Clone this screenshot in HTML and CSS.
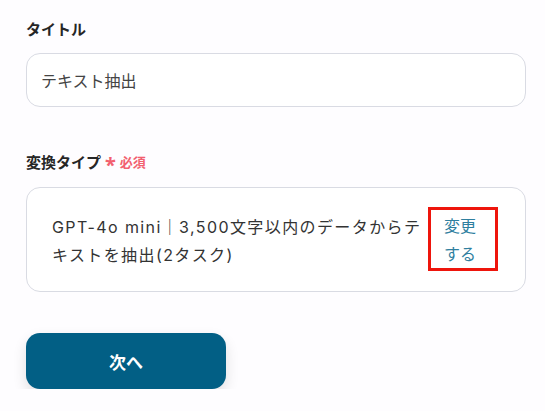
FILE: index.html
```html
<!DOCTYPE html>
<html lang="ja">
<head>
<meta charset="utf-8">
<link rel="stylesheet" href="styles.css">
</head>
<body>
<main class="form">
  <section class="field">
    <div class="label">タイトル</div>
    <div class="input">テキスト抽出</div>
  </section>
  <section class="field field-type">
    <div class="label">変換タイプ<span class="req"><span class="ast">*</span>必須</span></div>
    <div class="select">
      <div class="select-text">GPT-4o mini｜3,500文字以内のデータからテキストを抽出(2タスク)</div>
      <div class="change-wrap"><a class="change">変更する</a></div>
    </div>
  </section>
  <button class="next">次へ</button>
</main>
</body>
</html>
```
FILE: styles.css
```css
html, body {
  margin: 0;
  padding: 0;
  background: #fefdff;
}
body {
  font-family: "Noto Sans", "Noto Sans CJK JP", sans-serif;
  color: #333;
}
.form {
  padding: 18px 19px 0 26px;
  display: flex;
  flex-direction: column;
}
.label {
  font-size: 15px;
  font-weight: 700;
  color: #262626;
  line-height: 22px;
  display: flex;
  align-items: center;
}
.input {
  margin-top: 13px;
  height: 54px;
  box-sizing: border-box;
  border: 1px solid #d9dbe3;
  border-radius: 14px;
  background: #fff;
  padding: 0 14px;
  display: flex;
  align-items: center;
  font-size: 16px;
  color: #444;
}
.field-type {
  margin-top: 44px;
}
.req {
  color: #f2606f;
  font-size: 13px;
  font-weight: 700;
  margin-left: 4px;
  display: inline-flex;
  align-items: center;
}
.ast {
  font-size: 20px;
  margin-right: 4px;
  position: relative;
  top: 3px;
}
.select {
  margin-top: 14px;
  border: 1px solid #d9dbe3;
  border-radius: 14px;
  background: #fff;
  padding: 25px 27px 20px 25px;
  display: flex;
  align-items: flex-start;
}
.select-text {
  width: 376px;
  font-family: "Inter", "Noto Sans CJK JP", sans-serif;
  font-size: 16px;
  letter-spacing: 1.4px;
  line-height: 28px;
  color: #333;
}
.change-wrap {
  border: 3px solid #ee150c;
  padding: 2px 19px 0 13px;
  margin-top: -6px;
}
.change {
  display: block;
  width: 2em;
  font-size: 16px;
  line-height: 28px;
  color: #2f7f9f;
}
.next {
  margin-top: 41px;
  width: 200px;
  height: 56px;
  border: none;
  border-radius: 14px;
  background: #025f85;
  color: #fff;
  font-family: inherit;
  font-size: 17px;
  font-weight: 700;
  box-shadow: 0 6px 14px rgba(0, 0, 0, 0.12);
}
```
